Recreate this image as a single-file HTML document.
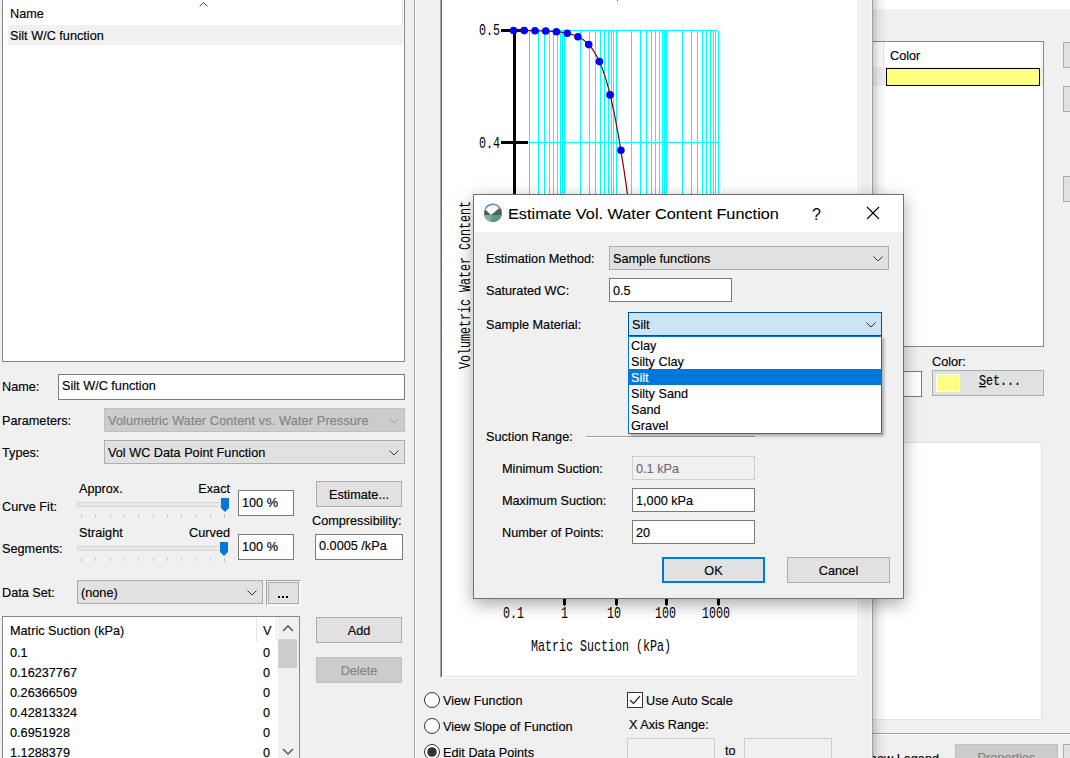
<!DOCTYPE html><html><head><meta charset="utf-8"><style>
html,body{margin:0;padding:0;}
body{width:1070px;height:758px;overflow:hidden;position:relative;background:#f0f0f0;font-family:"Liberation Sans",sans-serif;}
body div{position:absolute;box-sizing:border-box;}
.t{font-size:12.7px;line-height:15px;white-space:nowrap;color:#000;-webkit-text-stroke:0.15px currentColor;}
.m{font-family:"Liberation Mono",monospace;}
svg{position:absolute;}
</style></head><body>
<div style="left:873px;top:0px;width:197px;height:9px;background:#fff"></div>
<div style="left:860px;top:41px;width:184px;height:306px;background:#fff;border:1px solid #828790"></div>
<div style="left:883px;top:42px;width:1px;height:24px;background:#e5e5e5"></div>
<div style="left:1041px;top:43px;width:1px;height:24px;background:#ececec"></div>
<div class="t" style="left:890px;top:49px;">Color</div>
<div style="left:861px;top:67px;width:182px;height:19px;background:#f0f0f0"></div>
<div style="left:886px;top:68px;width:154px;height:18px;background:#ffff80;border:1px solid #000"></div>
<div style="left:1063px;top:42px;width:20px;height:26px;background:#e1e1e1;border:1px solid #adadad"></div>
<div style="left:1063px;top:86px;width:20px;height:26px;background:#e1e1e1;border:1px solid #adadad"></div>
<div style="left:1063px;top:176px;width:20px;height:26px;background:#e1e1e1;border:1px solid #adadad"></div>
<div style="left:860px;top:371px;width:62px;height:26px;background:#fff;border:1px solid #7a7a7a"></div>
<div class="t" style="left:932px;top:355px;">Color:</div>
<div style="left:932px;top:370px;width:112px;height:26px;background:#e1e1e1;border:1px solid #adadad"></div>
<div style="left:936px;top:374px;width:24px;height:18px;background:#ffff80;border:1px solid #fff;outline:0"></div>
<div class="t m" style="left:979px;top:375px;font-size:11.67px;transform:scaleY(1.3);transform-origin:0 11px"><span style="text-decoration:underline">S</span>et...</div>
<div style="left:860px;top:442px;width:182px;height:278px;background:#fff;border:1px solid #e3e3e3"></div>
<div style="left:873px;top:733px;width:197px;height:1px;background:#a0a0a0"></div>
<div style="left:873px;top:734px;width:197px;height:1px;background:#fff"></div>
<div class="t" style="right:131px;top:752px;">Show Legend</div>
<div style="left:955px;top:744px;width:103px;height:26px;background:#cccccc;border:1px solid #bfbfbf"></div>
<div class="t" style="left:955px;top:751px;width:103px;text-align:center;color:#838383">Properties</div>
<div style="left:1063px;top:744px;width:20px;height:26px;background:#e1e1e1;border:1px solid #adadad"></div>
<div style="left:0px;top:0px;width:873px;height:758px;background:#f0f0f0"></div>
<div style="left:871px;top:0px;width:1px;height:758px;background:#f8f8f8"></div>
<div style="left:872px;top:0px;width:1px;height:758px;background:#a0a0a0"></div>
<div style="left:873px;top:0px;width:14px;height:758px;background:linear-gradient(to right, rgba(0,0,0,0.19), rgba(0,0,0,0.06) 45%, rgba(0,0,0,0.0))"></div>
<div style="left:2px;top:-20px;width:403px;height:382px;background:#fff;border:1px solid #828790"></div>
<div style="left:402px;top:1px;width:1px;height:24px;background:#e5e5e5"></div>
<svg width="12" height="8" style="left:198px;top:1px"><path d="M1.5 5.5 L5.5 1.5 L9.5 5.5" fill="none" stroke="#555" stroke-width="1"/></svg>
<div class="t" style="left:10px;top:7px;">Name</div>
<div style="left:8px;top:25px;width:395px;height:20px;background:#f0f0f0"></div>
<div class="t" style="left:10px;top:29px;">Silt W/C function</div>
<div class="t" style="left:2px;top:380px;">Name:</div>
<div style="left:58px;top:374px;width:347px;height:26px;background:#fff;border:1px solid #7a7a7a"></div>
<div class="t" style="left:62px;top:379px;color:#000">Silt W/C function</div>
<div class="t" style="left:2px;top:414px;">Parameters:</div>
<div style="left:104px;top:408px;width:301px;height:24px;background:#cccccc;border:1px solid #bfbfbf"><svg width="10" height="6" viewBox="0 0 10 6" style="position:absolute;right:5px;top:9px"><path d="M0.5 0.5 L5 5 L9.5 0.5" fill="none" stroke="#a0a0a0" stroke-width="1"/></svg></div>
<div class="t" style="left:108px;top:414px;color:#838383;letter-spacing:0.13px">Volumetric Water Content vs. Water Pressure</div>
<div class="t" style="left:2px;top:446px;">Types:</div>
<div style="left:104px;top:440px;width:301px;height:24px;background:#e1e1e1;border:1px solid #adadad"><svg width="10" height="6" viewBox="0 0 10 6" style="position:absolute;right:5px;top:9px"><path d="M0.5 0.5 L5 5 L9.5 0.5" fill="none" stroke="#333" stroke-width="1"/></svg></div>
<div class="t" style="left:108px;top:446px;color:#000;">Vol WC Data Point Function</div>
<div class="t" style="left:2px;top:500px;">Curve Fit:</div>
<div class="t" style="left:79px;top:482px;">Approx.</div>
<div class="t" style="right:840px;top:482px;">Exact</div>
<div style="left:77px;top:502px;width:146px;height:5px;background:#e7eaea;border:1px solid #d6d6d6"></div>
<div style="left:81px;top:514px;width:1px;height:4px;background:#c4c4c4"></div>
<div style="left:95px;top:514px;width:1px;height:3px;background:#c4c4c4"></div>
<div style="left:110px;top:514px;width:1px;height:3px;background:#c4c4c4"></div>
<div style="left:124px;top:514px;width:1px;height:3px;background:#c4c4c4"></div>
<div style="left:138px;top:514px;width:1px;height:3px;background:#c4c4c4"></div>
<div style="left:153px;top:514px;width:1px;height:3px;background:#c4c4c4"></div>
<div style="left:167px;top:514px;width:1px;height:3px;background:#c4c4c4"></div>
<div style="left:181px;top:514px;width:1px;height:3px;background:#c4c4c4"></div>
<div style="left:196px;top:514px;width:1px;height:3px;background:#c4c4c4"></div>
<div style="left:210px;top:514px;width:1px;height:3px;background:#c4c4c4"></div>
<div style="left:224px;top:514px;width:1px;height:4px;background:#c4c4c4"></div>
<svg width="8" height="14" style="left:221px;top:498px"><path d="M0 0 H8 V10 L4 14 L0 10 Z" fill="#0078d7"/></svg>
<div style="left:238px;top:490px;width:56px;height:26px;background:#fff;border:1px solid #7a7a7a"></div>
<div class="t" style="left:242px;top:496px;color:#000">100 %</div>
<div style="left:316px;top:481px;width:86px;height:26px;background:#e1e1e1;border:1px solid #adadad"></div>
<div class="t" style="left:316px;top:488px;width:86px;text-align:center;color:#000">Estimate...</div>
<div class="t" style="left:312px;top:514px;">Compressibility:</div>
<div style="left:315px;top:534px;width:88px;height:26px;background:#fff;border:1px solid #7a7a7a"></div>
<div class="t" style="left:319px;top:539px;color:#000">0.0005 /kPa</div>
<div class="t" style="left:2px;top:542px;">Segments:</div>
<div class="t" style="left:79px;top:526px;">Straight</div>
<div class="t" style="right:840px;top:526px;">Curved</div>
<div style="left:77px;top:546px;width:146px;height:5px;background:#e7eaea;border:1px solid #d6d6d6"></div>
<div style="left:81px;top:558px;width:1px;height:4px;background:#c4c4c4"></div>
<div style="left:95px;top:558px;width:1px;height:3px;background:#c4c4c4"></div>
<div style="left:110px;top:558px;width:1px;height:3px;background:#c4c4c4"></div>
<div style="left:124px;top:558px;width:1px;height:3px;background:#c4c4c4"></div>
<div style="left:138px;top:558px;width:1px;height:3px;background:#c4c4c4"></div>
<div style="left:153px;top:558px;width:1px;height:3px;background:#c4c4c4"></div>
<div style="left:167px;top:558px;width:1px;height:3px;background:#c4c4c4"></div>
<div style="left:181px;top:558px;width:1px;height:3px;background:#c4c4c4"></div>
<div style="left:196px;top:558px;width:1px;height:3px;background:#c4c4c4"></div>
<div style="left:210px;top:558px;width:1px;height:3px;background:#c4c4c4"></div>
<div style="left:224px;top:558px;width:1px;height:4px;background:#c4c4c4"></div>
<svg width="8" height="14" style="left:220px;top:542px"><path d="M0 0 H8 V10 L4 14 L0 10 Z" fill="#0078d7"/></svg>
<div style="left:238px;top:534px;width:56px;height:26px;background:#fff;border:1px solid #7a7a7a"></div>
<div class="t" style="left:242px;top:540px;color:#000">100 %</div>
<div class="t" style="left:2px;top:586px;">Data Set:</div>
<div style="left:77px;top:580px;width:186px;height:24px;background:#e1e1e1;border:1px solid #adadad"><svg width="10" height="6" viewBox="0 0 10 6" style="position:absolute;right:5px;top:9px"><path d="M0.5 0.5 L5 5 L9.5 0.5" fill="none" stroke="#333" stroke-width="1"/></svg></div>
<div class="t" style="left:81px;top:586px;color:#000;">(none)</div>
<div style="left:266px;top:580px;width:35px;height:26px;background:#f0f0f0;border-top:1px solid #a0a0a0;border-left:1px solid #a0a0a0;border-bottom:1px solid #fff;border-right:1px solid #fff"></div>
<div style="left:268px;top:582px;width:31px;height:22px;background:#e1e1e1;border:1px solid #adadad"></div>
<div style="left:278px;top:596px;width:2px;height:2px;background:#000"></div>
<div style="left:282px;top:596px;width:2px;height:2px;background:#000"></div>
<div style="left:286px;top:596px;width:2px;height:2px;background:#000"></div>
<div style="left:2px;top:616px;width:298px;height:160px;background:#fff;border:1px solid #828790"></div>
<div style="left:256px;top:618px;width:1px;height:24px;background:#e5e5e5"></div>
<div style="left:276px;top:618px;width:1px;height:24px;background:#e5e5e5"></div>
<div class="t" style="left:10px;top:624px;">Matric Suction (kPa)</div>
<div class="t" style="left:263px;top:624px;">V</div>
<div style="left:278px;top:617px;width:21px;height:141px;background:#f0f0f0"></div>
<div style="left:278px;top:639px;width:19px;height:29px;background:#cdcdcd"></div>
<svg width="12" height="7" style="left:282px;top:625px"><path d="M1 6 L6 1 L11 6" fill="none" stroke="#606060" stroke-width="1.6"/></svg>
<svg width="12" height="7" style="left:282px;top:748px"><path d="M1 1 L6 6 L11 1" fill="none" stroke="#606060" stroke-width="1.6"/></svg>
<div class="t" style="left:10px;top:646px;">0.1</div>
<div class="t" style="left:263px;top:646px;">0</div>
<div class="t" style="left:10px;top:666px;">0.16237767</div>
<div class="t" style="left:263px;top:666px;">0</div>
<div class="t" style="left:10px;top:686px;">0.26366509</div>
<div class="t" style="left:263px;top:686px;">0</div>
<div class="t" style="left:10px;top:706px;">0.42813324</div>
<div class="t" style="left:263px;top:706px;">0</div>
<div class="t" style="left:10px;top:726px;">0.6951928</div>
<div class="t" style="left:263px;top:726px;">0</div>
<div class="t" style="left:10px;top:746px;">1.1288379</div>
<div class="t" style="left:263px;top:746px;">0</div>
<div style="left:316px;top:617px;width:86px;height:26px;background:#e1e1e1;border:1px solid #adadad"></div>
<div class="t" style="left:316px;top:624px;width:86px;text-align:center;color:#000">Add</div>
<div style="left:316px;top:657px;width:86px;height:26px;background:#cccccc;border:1px solid #bfbfbf"></div>
<div class="t" style="left:316px;top:664px;width:86px;text-align:center;color:#838383">Delete</div>
<div style="left:414px;top:0px;width:1px;height:758px;background:#a0a0a0"></div>
<div style="left:415px;top:0px;width:1px;height:758px;background:#fff"></div>
<div style="left:440px;top:-10px;width:420px;height:688px;background:#fff;border-left:1px solid #a0a0a0;border-bottom:1px solid #fff;border-right:1px solid #fff"></div>
<div style="left:441px;top:-10px;width:418px;height:687px;background:#fff;border-left:1px solid #696969;border-bottom:1px solid #e3e3e3;border-right:1px solid #e3e3e3"></div>
<svg width="1070" height="758" style="left:0;top:0"><defs><clipPath id="cp"><rect x="0" y="0" width="1070" height="597"/></clipPath></defs><g clip-path="url(#cp)">
<rect x="529" y="30" width="1" height="600" fill="#00ffff"/>
<rect x="538" y="30" width="1" height="600" fill="#00ffff"/>
<rect x="544" y="30" width="1" height="600" fill="#00ffff"/>
<rect x="549" y="30" width="1" height="600" fill="#00ffff"/>
<rect x="553" y="30" width="1" height="600" fill="#00ffff"/>
<rect x="557" y="30" width="1" height="600" fill="#00ffff"/>
<rect x="560" y="30" width="1" height="600" fill="#00ffff"/>
<rect x="562" y="30" width="1" height="600" fill="#00ffff"/>
<rect x="564" y="30" width="1" height="600" fill="#00ffff"/>
<rect x="564" y="30" width="1" height="600" fill="#00ffff"/>
<rect x="580" y="30" width="1" height="600" fill="#00ffff"/>
<rect x="589" y="30" width="1" height="600" fill="#00ffff"/>
<rect x="595" y="30" width="1" height="600" fill="#00ffff"/>
<rect x="600" y="30" width="1" height="600" fill="#00ffff"/>
<rect x="604" y="30" width="1" height="600" fill="#00ffff"/>
<rect x="608" y="30" width="1" height="600" fill="#00ffff"/>
<rect x="611" y="30" width="1" height="600" fill="#00ffff"/>
<rect x="613" y="30" width="1" height="600" fill="#00ffff"/>
<rect x="616" y="30" width="1" height="600" fill="#00ffff"/>
<rect x="616" y="30" width="1" height="600" fill="#00ffff"/>
<rect x="631" y="30" width="1" height="600" fill="#00ffff"/>
<rect x="640" y="30" width="1" height="600" fill="#00ffff"/>
<rect x="646" y="30" width="1" height="600" fill="#00ffff"/>
<rect x="651" y="30" width="1" height="600" fill="#00ffff"/>
<rect x="655" y="30" width="1" height="600" fill="#00ffff"/>
<rect x="659" y="30" width="1" height="600" fill="#00ffff"/>
<rect x="662" y="30" width="1" height="600" fill="#00ffff"/>
<rect x="664" y="30" width="1" height="600" fill="#00ffff"/>
<rect x="666" y="30" width="1" height="600" fill="#00ffff"/>
<rect x="666" y="30" width="1" height="600" fill="#00ffff"/>
<rect x="682" y="30" width="1" height="600" fill="#00ffff"/>
<rect x="691" y="30" width="1" height="600" fill="#00ffff"/>
<rect x="697" y="30" width="1" height="600" fill="#00ffff"/>
<rect x="702" y="30" width="1" height="600" fill="#00ffff"/>
<rect x="706" y="30" width="1" height="600" fill="#00ffff"/>
<rect x="710" y="30" width="1" height="600" fill="#00ffff"/>
<rect x="713" y="30" width="1" height="600" fill="#00ffff"/>
<rect x="715" y="30" width="1" height="600" fill="#00ffff"/>
<rect x="718" y="31" width="1" height="600" fill="#00ffff"/>
<rect x="516" y="30" width="202" height="1" fill="#00ffff"/>
<rect x="527" y="142" width="191" height="1" fill="#00ffff"/>
<rect x="513" y="29" width="3" height="600" fill="#000"/>
<rect x="501" y="29" width="27" height="3" fill="#000"/>
<rect x="501" y="141" width="27" height="3" fill="#000"/>
<polyline fill="none" stroke="#800000" stroke-width="1.2" points="513.5,30.5 514.5,30.5 515.5,30.5 516.6,30.5 517.6,30.6 518.6,30.6 519.6,30.6 520.6,30.6 521.7,30.6 522.7,30.6 523.7,30.6 524.7,30.6 525.7,30.6 526.8,30.6 527.8,30.6 528.8,30.6 529.8,30.6 530.8,30.7 531.9,30.7 532.9,30.7 533.9,30.7 534.9,30.7 535.9,30.7 537.0,30.7 538.0,30.8 539.0,30.8 540.0,30.8 541.0,30.8 542.1,30.9 543.1,30.9 544.1,30.9 545.1,31.0 546.1,31.0 547.2,31.1 548.2,31.1 549.2,31.2 550.2,31.2 551.2,31.3 552.3,31.3 553.3,31.4 554.3,31.5 555.3,31.6 556.3,31.6 557.4,31.7 558.4,31.8 559.4,32.0 560.4,32.1 561.4,32.2 562.5,32.4 563.5,32.5 564.5,32.7 565.5,32.9 566.5,33.1 567.6,33.3 568.6,33.5 569.6,33.7 570.6,34.0 571.6,34.3 572.7,34.6 573.7,35.0 574.7,35.3 575.7,35.7 576.7,36.2 577.8,36.6 578.8,37.1 579.8,37.7 580.8,38.3 581.8,38.9 582.9,39.6 583.9,40.3 584.9,41.1 585.9,42.0 586.9,42.9 588.0,43.9 589.0,45.0 590.0,46.1 591.0,47.4 592.0,48.7 593.1,50.1 594.1,51.7 595.1,53.3 596.1,55.1 597.1,57.0 598.2,59.0 599.2,61.1 600.2,63.4 601.2,65.9 602.2,68.5 603.3,71.3 604.3,74.3 605.3,77.4 606.3,80.7 607.3,84.2 608.4,87.9 609.4,91.8 610.4,96.0 611.4,100.3 612.4,104.8 613.5,109.6 614.5,114.5 615.5,119.7 616.5,125.1 617.5,130.6 618.6,136.4 619.6,142.4 620.6,148.5 621.6,154.9 622.6,161.4 623.7,168.0 624.7,174.8 625.7,181.7 626.7,188.8 627.7,195.9 628.8,203.1 629.8,210.4 630.8,217.8 631.8,225.2 632.8,232.6 633.9,240.1 634.9,247.5 635.9,254.9 636.9,262.3 637.9,269.6 639.0,276.9 640.0,284.1 641.0,291.3 642.0,298.3 643.0,305.3 644.1,312.1 645.1,318.8 646.1,325.5 647.1,332.0 648.1,338.3 649.2,344.6 650.2,350.7 651.2,356.6 652.2,362.5 653.2,368.2 654.3,373.7 655.3,379.1 656.3,384.4 657.3,389.5 658.3,394.5 659.4,399.4 660.4,404.1 661.4,408.7 662.4,413.1 663.4,417.4 664.5,421.6 665.5,425.7 666.5,429.7 667.5,433.5 668.5,437.2 669.6,440.8 670.6,444.3 671.6,447.6 672.6,450.9 673.6,454.1 674.7,457.1 675.7,460.1 676.7,462.9 677.7,465.7 678.7,468.4 679.8,471.0 680.8,473.5 681.8,475.9 682.8,478.3 683.8,480.5 684.9,482.7 685.9,484.9 686.9,486.9 687.9,488.9 688.9,490.8 690.0,492.7 691.0,494.5 692.0,496.2 693.0,497.9 694.0,499.5 695.1,501.0 696.1,502.6 697.1,504.0 698.1,505.4 699.1,506.8 700.2,508.1 701.2,509.4 702.2,510.6 703.2,511.8 704.2,513.0 705.3,514.1 706.3,515.1 707.3,516.2 708.3,517.2 709.3,518.1 710.4,519.1 711.4,520.0 712.4,520.9 713.4,521.7 714.4,522.5 715.5,523.3 716.5,524.1 717.5,524.8"/>
<circle cx="513.5" cy="30.5" r="3.8" fill="#0000ff"/>
<circle cx="524.2" cy="30.6" r="3.8" fill="#0000ff"/>
<circle cx="535.0" cy="30.7" r="3.8" fill="#0000ff"/>
<circle cx="545.7" cy="31.0" r="3.8" fill="#0000ff"/>
<circle cx="556.4" cy="31.7" r="3.8" fill="#0000ff"/>
<circle cx="567.2" cy="33.2" r="3.8" fill="#0000ff"/>
<circle cx="577.9" cy="36.7" r="3.8" fill="#0000ff"/>
<circle cx="588.7" cy="44.6" r="3.8" fill="#0000ff"/>
<circle cx="599.4" cy="61.6" r="3.8" fill="#0000ff"/>
<circle cx="610.1" cy="94.9" r="3.8" fill="#0000ff"/>
<circle cx="620.9" cy="150.2" r="3.8" fill="#0000ff"/>
<circle cx="631.6" cy="223.6" r="3.8" fill="#0000ff"/>
<circle cx="642.3" cy="300.5" r="3.8" fill="#0000ff"/>
<circle cx="653.1" cy="367.3" r="3.8" fill="#0000ff"/>
<circle cx="663.8" cy="419.0" r="3.8" fill="#0000ff"/>
<circle cx="674.6" cy="456.8" r="3.8" fill="#0000ff"/>
<circle cx="685.3" cy="483.6" r="3.8" fill="#0000ff"/>
<circle cx="696.0" cy="502.5" r="3.8" fill="#0000ff"/>
<circle cx="706.8" cy="515.6" r="3.8" fill="#0000ff"/>
<circle cx="717.5" cy="524.8" r="3.8" fill="#0000ff"/>
<rect x="617" y="0" width="1" height="1" fill="#444"/>
</g>
<g font-family="Liberation Mono" font-size="11.67" fill="#000">
<text transform="translate(479,35) scale(1,1.35)" x="0" y="0" >0.5</text>
<text transform="translate(479,148) scale(1,1.35)" x="0" y="0" >0.4</text>
<text transform="translate(470,369) rotate(-90) scale(1,1.35)" x="0" y="0">Volumetric Water Content</text>
<rect x="563" y="596" width="3" height="9" fill="#000"/><rect x="564" y="605" width="1" height="1" fill="#000"/>
<rect x="615" y="596" width="3" height="9" fill="#000"/><rect x="616" y="605" width="1" height="1" fill="#000"/>
<rect x="665" y="596" width="3" height="9" fill="#000"/><rect x="666" y="605" width="1" height="1" fill="#000"/>
<rect x="717" y="596" width="3" height="9" fill="#000"/><rect x="718" y="605" width="1" height="1" fill="#000"/>
<rect x="529" y="598" width="1" height="1" fill="#000"/>
<rect x="538" y="598" width="1" height="1" fill="#000"/>
<rect x="544" y="598" width="1" height="1" fill="#000"/>
<rect x="549" y="598" width="1" height="1" fill="#000"/>
<rect x="553" y="598" width="1" height="1" fill="#000"/>
<rect x="557" y="598" width="1" height="1" fill="#000"/>
<rect x="560" y="598" width="1" height="1" fill="#000"/>
<rect x="562" y="598" width="1" height="1" fill="#000"/>
<rect x="580" y="598" width="1" height="1" fill="#000"/>
<rect x="589" y="598" width="1" height="1" fill="#000"/>
<rect x="595" y="598" width="1" height="1" fill="#000"/>
<rect x="600" y="598" width="1" height="1" fill="#000"/>
<rect x="604" y="598" width="1" height="1" fill="#000"/>
<rect x="608" y="598" width="1" height="1" fill="#000"/>
<rect x="611" y="598" width="1" height="1" fill="#000"/>
<rect x="613" y="598" width="1" height="1" fill="#000"/>
<rect x="631" y="598" width="1" height="1" fill="#000"/>
<rect x="640" y="598" width="1" height="1" fill="#000"/>
<rect x="646" y="598" width="1" height="1" fill="#000"/>
<rect x="651" y="598" width="1" height="1" fill="#000"/>
<rect x="655" y="598" width="1" height="1" fill="#000"/>
<rect x="659" y="598" width="1" height="1" fill="#000"/>
<rect x="662" y="598" width="1" height="1" fill="#000"/>
<rect x="664" y="598" width="1" height="1" fill="#000"/>
<rect x="682" y="598" width="1" height="1" fill="#000"/>
<rect x="691" y="598" width="1" height="1" fill="#000"/>
<rect x="697" y="598" width="1" height="1" fill="#000"/>
<rect x="702" y="598" width="1" height="1" fill="#000"/>
<rect x="706" y="598" width="1" height="1" fill="#000"/>
<rect x="710" y="598" width="1" height="1" fill="#000"/>
<rect x="713" y="598" width="1" height="1" fill="#000"/>
<rect x="715" y="598" width="1" height="1" fill="#000"/>
<text transform="translate(503,618) scale(1,1.35)" x="0" y="0" >0.1</text>
<text transform="translate(561,618) scale(1,1.35)" x="0" y="0" >1</text>
<text transform="translate(607,618) scale(1,1.35)" x="0" y="0" >10</text>
<text transform="translate(655,618) scale(1,1.35)" x="0" y="0" >100</text>
<text transform="translate(702,618) scale(1,1.35)" x="0" y="0" >1000</text>
<text transform="translate(531,651) scale(1,1.35)" x="0" y="0" >Matric Suction (kPa)</text>
</g>
</svg>
<svg width="18" height="18" style="left:423px;top:691px"><circle cx="9" cy="9" r="7.5" fill="#fff" stroke="#333" stroke-width="1"/></svg>
<div class="t" style="left:443px;top:694px;">View Function</div>
<svg width="18" height="18" style="left:423px;top:717px"><circle cx="9" cy="9" r="7.5" fill="#fff" stroke="#333" stroke-width="1"/></svg>
<div class="t" style="left:443px;top:720px;">View Slope of Function</div>
<svg width="18" height="18" style="left:423px;top:743px"><circle cx="9" cy="9" r="7.5" fill="#fff" stroke="#333" stroke-width="1"/><circle cx="9" cy="9" r="4.8" fill="#333"/></svg>
<div class="t" style="left:443px;top:746px;">Edit Data Points</div>
<svg width="17" height="17" style="left:627px;top:692px"><rect x="0.5" y="0.5" width="15" height="15" fill="#fff" stroke="#333"/><path d="M3 8 L6.5 11.5 L13 4" fill="none" stroke="#333" stroke-width="1.3"/></svg>
<div class="t" style="left:646px;top:694px;">Use Auto Scale</div>
<div class="t" style="left:629px;top:718px;">X Axis Range:</div>
<div style="left:627px;top:738px;width:88px;height:26px;background:#f0f0f0;border:1px solid #cccccc"></div>
<div class="t" style="left:725px;top:744px;">to</div>
<div style="left:744px;top:738px;width:88px;height:26px;background:#f0f0f0;border:1px solid #cccccc"></div>
<div style="left:473px;top:194px;width:431px;height:405px;background:#f0f0f0;border:1px solid #707070;box-shadow:0 5px 16px rgba(0,0,0,0.35)"></div>
<div style="left:474px;top:195px;width:429px;height:37px;background:#fff"></div>
<svg width="20" height="20" style="left:483px;top:203px" viewBox="0 0 20 20">
<circle cx="10" cy="10" r="9" fill="#555d66"/>
<path d="M1.2 11.9 A9 9 0 0 0 18.8 11.9 Z" fill="#5e9686"/>
<path d="M1.2 11.9 A9 9 0 0 0 8.1 18.8 L8.1 11.9 Z" fill="#7ab59e"/>
<path d="M8.1 11.9 L2.0 6.3 A8.6 8.6 0 0 1 16.9 4.6 Z" fill="#fff"/>
<path d="M2.3 6.0 A8.3 8.3 0 0 1 16.6 4.9" fill="none" stroke="#5b8fd0" stroke-width="1.6"/>
</svg>
<div class="t" style="left:508px;top:204px;font-size:16.3px;line-height:20px;-webkit-text-stroke:0.1px;transform:scaleY(0.93);transform-origin:0 4px">Estimate Vol. Water Content Function</div>
<div class="t" style="left:812px;top:205px;font-size:16px;line-height:20px;-webkit-text-stroke:0">?</div>
<svg width="14" height="14" style="left:866px;top:206px"><path d="M1 1 L13 13 M13 1 L1 13" stroke="#000" stroke-width="1.1"/></svg>
<div class="t" style="left:486px;top:252px;">Estimation Method:</div>
<div style="left:609px;top:246px;width:280px;height:24px;background:#e1e1e1;border:1px solid #adadad"><svg width="10" height="6" viewBox="0 0 10 6" style="position:absolute;right:5px;top:9px"><path d="M0.5 0.5 L5 5 L9.5 0.5" fill="none" stroke="#333" stroke-width="1"/></svg></div>
<div class="t" style="left:613px;top:252px;color:#000;">Sample functions</div>
<div class="t" style="left:486px;top:284px;">Saturated WC:</div>
<div style="left:609px;top:278px;width:123px;height:24px;background:#fff;border:1px solid #7a7a7a"></div>
<div class="t" style="left:613px;top:284px;color:#000">0.5</div>
<div class="t" style="left:486px;top:318px;">Sample Material:</div>
<div style="left:628px;top:312px;width:254px;height:24px;background:#cce4f7;border:1px solid #005499"><svg width="10" height="6" viewBox="0 0 10 6" style="position:absolute;right:5px;top:9px"><path d="M0.5 0.5 L5 5 L9.5 0.5" fill="none" stroke="#333" stroke-width="1"/></svg></div>
<div class="t" style="left:632px;top:318px;color:#000;">Silt</div>
<div style="left:586px;top:436px;width:169px;height:1px;background:#a0a0a0"></div>
<div style="left:586px;top:437px;width:169px;height:1px;background:#fff"></div>
<div class="t" style="left:486px;top:430px;">Suction Range:</div>
<div class="t" style="left:502px;top:462px;">Minimum Suction:</div>
<div style="left:632px;top:456px;width:123px;height:24px;background:#f0f0f0;border:1px solid #cccccc"></div>
<div class="t" style="left:636px;top:462px;color:#6d6d6d">0.1 kPa</div>
<div class="t" style="left:502px;top:494px;">Maximum Suction:</div>
<div style="left:632px;top:488px;width:123px;height:24px;background:#fff;border:1px solid #7a7a7a"></div>
<div class="t" style="left:636px;top:494px;color:#000">1,000 kPa</div>
<div class="t" style="left:502px;top:526px;">Number of Points:</div>
<div style="left:632px;top:520px;width:123px;height:24px;background:#fff;border:1px solid #7a7a7a"></div>
<div class="t" style="left:636px;top:526px;color:#000">20</div>
<div style="left:662px;top:557px;width:103px;height:26px;background:#e1e1e1;border:2px solid #0078d7"></div>
<div class="t" style="left:662px;top:564px;width:103px;text-align:center;color:#000">OK</div>
<div style="left:787px;top:557px;width:103px;height:26px;background:#e1e1e1;border:1px solid #adadad"></div>
<div class="t" style="left:787px;top:564px;width:103px;text-align:center;color:#000">Cancel</div>
<div style="left:628px;top:336px;width:254px;height:98px;background:#fff;border:1px solid #0078d7;box-shadow:2px 2px 3px rgba(0,0,0,0.3)"></div>
<div style="left:629px;top:369px;width:252px;height:16px;background:#0078d7"></div>
<div class="t" style="left:631px;top:339px;">Clay</div>
<div class="t" style="left:631px;top:355px;">Silty Clay</div>
<div class="t" style="left:631px;top:371px;color:#fff">Silt</div>
<div class="t" style="left:631px;top:387px;">Silty Sand</div>
<div class="t" style="left:631px;top:403px;">Sand</div>
<div class="t" style="left:631px;top:419px;">Gravel</div>
</body></html>
